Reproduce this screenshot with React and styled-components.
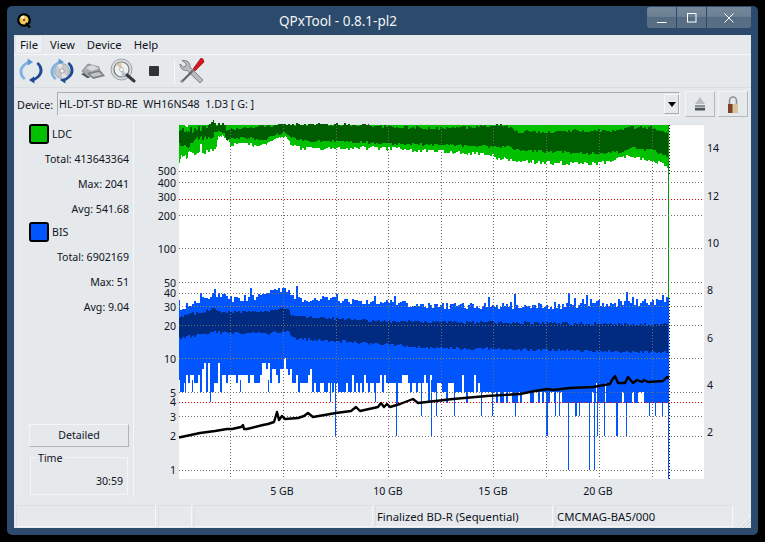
import React, { useMemo } from "react";
import styled, { createGlobalStyle } from "styled-components";

const GlobalStyle = createGlobalStyle`
  html, body {
    margin: 0;
    padding: 0;
    background: #000;
  }
  body {
    font-family: "Noto Sans", "Open Sans", sans-serif;
    font-size: 12px;
    color: #10131c;
  }
`;

const Window = styled.div`
  box-sizing: border-box;
  width: 751px;
  height: 529px;
  margin: 6px 0 0 7px;
  padding: 0 7px 7px;
  display: flex;
  flex-direction: column;
  background: #2c4a6b;
  border-radius: 5px;
`;

const TitleBar = styled.div`
  height: 29px;
  flex: none;
  position: relative;
  display: flex;
  align-items: center;
`;

const Title = styled.div`
  position: absolute;
  left: 0;
  width: 648px;
  top: 6px;
  text-align: center;
  font-size: 13.5px;
  line-height: 18px;
  color: #f2f4f6;
`;

const AppLogo = styled.svg`
  width: 15px;
  height: 15px;
  margin: 0 0 0 3px;
`;

const WinControls = styled.div`
  position: absolute;
  top: 1px;
  right: 0;
  display: flex;
  gap: 1px;
`;

const WinButton = styled.div`
  width: ${(p) => p.$w}px;
  height: 21px;
  display: flex;
  align-items: center;
  justify-content: center;
  background: linear-gradient(#75889a 0%, #6c8093 45%, #566c82 50%, #5a7086 100%);
  border-radius: ${(p) => p.$radius || "0"};
`;

const Content = styled.div`
  flex: 1;
  display: flex;
  flex-direction: column;
  background: #e6e9ec;
  min-height: 0;
`;

const MenuBar = styled.div`
  box-sizing: border-box;
  height: 20px;
  flex: none;
  display: flex;
  align-items: stretch;
  padding-left: 1px;
  border-bottom: 1px solid #f6f7f8;
`;

const MenuItem = styled.div`
  padding: 0 5px;
  margin-right: 2px;
  line-height: 19px;
  font-size: 11.3px;
  ${(p) => p.$active && "background: #eceff1; box-shadow: inset 0 0 0 1px #dfe2e5;"}
`;

const ToolBar = styled.div`
  box-sizing: border-box;
  height: 33px;
  flex: none;
  display: flex;
  align-items: center;
  padding-left: 4px;
  border-bottom: 1px solid #dadde0;
`;

const ToolIcon = styled.svg`
  width: 26px;
  height: 26px;
  margin-right: ${(p) => p.$gap ?? 5}px;
  flex: none;
`;

const StopIcon = styled.div`
  width: 10px;
  height: 10px;
  margin: 0 15px 0 13px;
  background: #333;
  border-radius: 1px;
  flex: none;
`;

const ToolSep = styled.div`
  width: 1px;
  height: 25px;
  background: #f6f7f8;
  margin-right: 4px;
  flex: none;
`;

const DeviceRow = styled.div`
  box-sizing: border-box;
  height: 32px;
  flex: none;
  display: flex;
  align-items: center;
  padding: 0 4px 0 3px;
`;

const DeviceLabel = styled.div`
  width: 40px;
  font-size: 10.8px;
  flex: none;
`;

const Combo = styled.div`
  box-sizing: border-box;
  width: 623px;
  height: 24px;
  flex: none;
  display: flex;
  align-items: center;
  justify-content: space-between;
  padding: 0 0 0 1px;
  border: 1px solid;
  border-color: #a9aeb3 #f6f7f8 #f6f7f8 #a9aeb3;
`;

const ComboText = styled.div`
  font-size: 10.7px;
  white-space: pre;
`;

const ComboArrow = styled.div`
  box-sizing: border-box;
  width: 15px;
  height: 20px;
  display: flex;
  align-items: center;
  justify-content: center;
  border: 1px solid;
  border-color: #f6f7f8 #a9aeb3 #a9aeb3 #f6f7f8;
  &::after {
    content: "";
    border-left: 4px solid transparent;
    border-right: 4px solid transparent;
    border-top: 5px solid #000;
  }
`;

const SquareButton = styled.div`
  box-sizing: border-box;
  width: 30px;
  height: 26px;
  margin-left: ${(p) => p.$left}px;
  flex: none;
  display: flex;
  align-items: center;
  justify-content: center;
  border: 1px solid;
  border-color: #f4f5f6 #b3b8bd #b3b8bd #f4f5f6;
`;

const Main = styled.div`
  flex: 1;
  display: flex;
  min-height: 0;
`;

const Sidebar = styled.div`
  box-sizing: border-box;
  width: 114px;
  flex: none;
  display: flex;
  flex-direction: column;
  padding: 4px 4px 3px 8px;
  margin: 0 0 6px 6px;
  border-left: 1px solid #eceef0;
  border-right: 1px solid #f4f5f6;
`;

const LegendRow = styled.div`
  display: flex;
  align-items: center;
  gap: 3px;
  height: 20px;
  font-size: 10.6px;
`;

const Swatch = styled.div`
  box-sizing: border-box;
  width: 20px;
  height: 20px;
  background: ${(p) => p.$color};
  border: 2px solid #000;
  border-radius: 3px;
`;

const StatRow = styled.div`
  height: 25px;
  line-height: 25px;
  text-align: right;
  font-size: 10.6px;
  margin-top: ${(p) => (p.$first ? 3 : 0)}px;
`;

const Spacer = styled.div`
  flex: 1;
`;

const DetailedButton = styled.div`
  box-sizing: border-box;
  height: 23px;
  line-height: 21px;
  text-align: center;
  font-size: 10.6px;
  border: 1px solid;
  border-color: #f4f5f6 #afb4b9 #afb4b9 #f4f5f6;
`;

const TimeGroup = styled.div`
  box-sizing: border-box;
  position: relative;
  height: 38px;
  margin: 10px 1px 0 1px;
  border: 1px solid #f4f5f6;
  text-align: right;
  padding: 15px 4px 0 0;
  line-height: 16px;
  font-size: 10.6px;
`;

const TimeLegend = styled.div`
  position: absolute;
  top: -6px;
  left: 5px;
  padding: 0 2px;
  line-height: 13px;
  font-size: 10.6px;
  background: #e6e9ec;
`;

const ChartSvg = styled.svg`
  display: block;
  width: 617px;
  height: 380px;
  flex: none;
  font-family: "Noto Sans", "Open Sans", sans-serif;
  font-size: 10.6px;
  fill: #10131c;
`;

const StatusBar = styled.div`
  height: 23px;
  flex: none;
  display: flex;
  padding: 1px 0 0 2px;
  gap: 2px;
  position: relative;
`;

const StatusCell = styled.div`
  box-sizing: border-box;
  width: ${(p) => p.$w}px;
  height: 22px;
  padding-left: 1px;
  line-height: 21px;
  font-size: 11.3px;
  white-space: nowrap;
  border: 1px solid;
  border-color: #dcdfe2 #f6f7f8 #f6f7f8 #dcdfe2;
`;

const Grip = styled.svg`
  position: absolute;
  right: 0;
  bottom: 0;
  width: 13px;
  height: 13px;
`;

// small seeded generator so the trace looks the same on each load
const makeRandom = (seed) => {
  let s = seed;
  return () => {
    s = (s * 1664525 + 1013904223) % 4294967296;
    return s / 4294967296;
  };
};

const curve = (pts) => (x) => {
  if (x <= pts[0][0]) return pts[0][1];
  for (let i = 1; i < pts.length; i++) {
    if (x <= pts[i][0]) {
      const [x0, y0] = pts[i - 1];
      const [x1, y1] = pts[i];
      return y0 + ((y1 - y0) * (x - x0)) / (x1 - x0);
    }
  }
  return pts[pts.length - 1][1];
};

const logY = (v) => 470 - 112 * Math.log10(v);
const snapLevels = [4, 5, 6, 7, 8, 9, 10, 11, 12, 13, 14].map(logY);
const snap = (y) =>
  snapLevels.reduce((a, b) => (Math.abs(b - y) < Math.abs(a - y) ? b : a));

const ldcLight = curve([
  [179, 163], [181, 156], [183, 153], [190, 149], [200, 146], [212, 147], [216, 149], [218, 135],
  [224, 137], [226, 137], [230, 144], [265, 145], [268, 141], [281, 137], [285, 136], [290, 145],
  [298, 148], [335, 149], [375, 148], [435, 151], [487, 154], [500, 159], [547, 163], [600, 163],
  [627, 157], [653, 160], [665, 165], [668, 171],
]);
const ldcDarkTop = curve([
  [179, 130], [190, 133], [200, 131], [210, 130], [213, 125], [225, 125], [226, 130], [240, 129],
  [260, 127], [285, 125], [335, 125], [388, 127], [435, 129], [483, 127], [500, 125], [510, 128],
  [517, 132], [547, 133], [570, 131], [620, 131], [627, 128], [653, 128], [668, 135],
]);
const ldcDarkBottom = curve([
  [179, 144], [190, 141], [200, 137], [210, 135], [214, 131], [224, 132], [226, 140], [240, 137],
  [265, 139], [275, 135], [283, 132], [290, 137], [300, 140], [335, 141], [388, 143], [435, 144],
  [487, 146], [508, 146], [517, 149], [547, 151], [587, 153], [620, 152], [633, 148], [653, 150],
  [668, 156],
]);
const bisTop = curve([
  [179, 305], [203, 295], [213, 293], [225, 292], [230, 297], [253, 293], [270, 288], [288, 287],
  [292, 295], [337, 297], [390, 298], [420, 302], [520, 303], [620, 300], [668, 298],
]);
const bisDarkTop = curve([
  [179, 317], [213, 310], [225, 313], [267, 312], [287, 308], [292, 317], [337, 319], [390, 322],
  [500, 323], [668, 325],
]);
const bisDarkBottom = curve([
  [179, 338], [213, 332], [267, 333], [287, 330], [292, 338], [390, 344], [420, 347], [668, 352],
]);
const bisBottom = curve([
  [179, 378], [213, 376], [225, 373], [270, 372], [285, 368], [292, 379], [335, 383], [420, 385],
  [520, 392], [620, 402], [668, 402],
]);

const bisSpikes = [
  [185, 392], [192, 392], [210, 402], [240, 392], [268, 392], [330, 402], [335, 436], [375, 402],
  [396, 436], [421, 416], [431, 436], [436, 416], [454, 416], [481, 416], [492, 416], [515, 416],
  [546, 436], [547, 436], [555, 416], [559, 416], [568, 470], [575, 416], [576, 416], [579, 416],
  [589, 470], [594, 470], [597, 436], [604, 436], [616, 436], [617, 436], [626, 436], [649, 416],
  [655, 416], [662, 416],
];

const piLine = [
  [179, 437.5], [200, 433], [215, 431], [221, 430], [227, 429], [232, 429], [241, 427], [243, 425],
  [244, 429], [247, 429], [263, 425], [268, 424], [274, 422], [277, 412],
  [279, 420], [282, 416], [285, 419], [298, 418], [304, 416], [308, 413], [313, 417], [336, 413],
  [351, 411], [356, 407], [360, 411], [378, 407], [381, 403], [384, 407], [387, 404], [390, 407],
  [400, 404], [413, 399], [418, 403], [453, 399], [487, 396], [520, 394], [535, 391], [548, 389],
  [553, 390], [570, 388], [593, 387], [610, 384], [612, 380], [615, 376], [618, 383], [625, 383],
  [628, 377], [633, 383], [637, 380], [642, 382], [644, 380], [648, 382], [663, 381], [667, 377],
  [669, 378],
];

const gridRows = [
  { y: 171 }, { y: 182 }, { y: 199, red: true }, { y: 215 }, { y: 248 }, { y: 282 }, { y: 293 },
  { y: 306 }, { y: 325 }, { y: 358 }, { y: 392 }, { y: 402, red: true }, { y: 416 }, { y: 436 },
  { y: 470 },
];
const gridCols = [230, 283, 336, 388, 441, 493, 546, 599, 652];

const leftLabels = [
  [500, 171], [400, 183], [300, 197], [200, 216], [100, 249], [50, 283], [40, 293], [30, 307],
  [20, 326], [10, 359], [5, 393], [4, 402], [3, 417], [2, 436], [1, 470],
];
const rightLabels = [
  [14, 148], [12, 196], [10, 243], [8, 290], [6, 338], [4, 385], [2, 432],
];
const bottomLabels = [
  ["5 GB", 282], ["10 GB", 388], ["15 GB", 493], ["20 GB", 598],
];

function buildTraces() {
  const rnd = makeRandom(20417);
  let lightGreen = "";
  let darkGreen = "";
  let blue = "";
  let darkBlue = "";
  let spikes = "";
  let noiseA = 0;
  let noiseB = 0;
  let noiseC = 0;
  let noiseD = 0;
  let noiseE = 0;
  let blueTop = 300;
  let blueEnd = 380;
  for (let x = 179; x <= 668; x++) {
    const col = x + 0.5;
    if (x % 2 === 0) {
      // the start of the disc is noisier than the rest
      const amp = x < 216 ? 2.4 : 1;
      noiseA = rnd() * 4 * amp;
      noiseB = rnd() * 3 * amp;
      noiseC = rnd() * 3 * amp;
      noiseD = rnd() * 3;
      noiseE = rnd() * 3;
      const r = rnd();
      blueTop = bisTop(x) + rnd() * 7 - (r < 0.2 ? rnd() * 12 : 0);
      const n = rnd();
      const base = bisBottom(x);
      if (n < 0.14) blueEnd = snap(base - 5 - rnd() * 9);
      else if (n < 0.62) blueEnd = snap(base);
      else blueEnd = snap(base + 5 + rnd() * 9);
    }
    const lb = x === 179 ? 163 : ldcLight(x) + noiseA - 2;
    lightGreen += `M${col} 125V${lb.toFixed(0)}`;
    darkGreen += `M${col} ${(ldcDarkTop(x) - noiseB + 1).toFixed(0)}V${(ldcDarkBottom(x) + noiseC - 1).toFixed(0)}`;
    blue += `M${col} ${blueTop.toFixed(0)}V${Math.min(blueEnd, 403).toFixed(0)}`;
    darkBlue += `M${col} ${(bisDarkTop(x) - noiseD + 1).toFixed(0)}V${(bisDarkBottom(x) + noiseE - 1).toFixed(0)}`;
  }
  bisSpikes.forEach(([x, y]) => {
    spikes += `M${x + 0.5} 380V${y}`;
  });
  return { lightGreen, darkGreen, blue, darkBlue, spikes };
}

function Chart() {
  const t = useMemo(buildTraces, []);
  const line = piLine.map(([x, y]) => `${x},${y}`).join(" ");
  return (
    <ChartSvg viewBox="134 120 617 380">
      <rect x="179" y="124" width="525" height="1" fill="#dfe2e5" />
      <rect x="179" y="125" width="525" height="354" fill="#fff" />
      <g fill="none" shapeRendering="crispEdges" strokeWidth="1">
        <path d={t.lightGreen} stroke="#00c000" />
        <path d={t.darkGreen} stroke="#005c00" />
        <path d="M185 125.500h3M186 126.500h2" stroke="#fff" />
        <path d={t.blue} stroke="#0055ff" />
        <path d={t.darkBlue} stroke="#002b80" />
        <path d={t.spikes} stroke="#0055ff" />
        <path d="M668.5 125V298" stroke="#00a000" />
        <path d="M668.5 298V479" stroke="#0055ff" />
        {gridCols.map((x) => (
          <path key={x} d={`M${x + 0.5} 125V479`} stroke="#6e6e6e" strokeDasharray="1 2" />
        ))}
        {gridRows.map((r) => (
          <path
            key={r.y}
            d={`M179 ${r.y + 0.5}H703`}
            stroke={r.red ? "#f00000" : "#6e6e6e"}
            strokeDasharray="1 2"
          />
        ))}
        <path d="M179 306.5H668M179 358.5H668" stroke="#a08a58" strokeDasharray="1 2" />
        <path d="M669.5 125V175M669.5 298V479" stroke="#000" strokeDasharray="1 2" />
      </g>
      <polyline points={line} fill="none" stroke="#000" strokeWidth="2.4" strokeLinejoin="round" />
      {leftLabels.map(([v, y]) => (
        <text key={v} x="176" y={y + 4} textAnchor="end">{v}</text>
      ))}
      {rightLabels.map(([v, y]) => (
        <text key={v} x="707" y={y + 4}>{v}</text>
      ))}
      {bottomLabels.map(([v, x]) => (
        <text key={v} x={x} y="495" textAnchor="middle">{v}</text>
      ))}
    </ChartSvg>
  );
}

const ArrowArcs = () => (
  <>
    <path d="M11 2.500C5 5 1.500 9 1.500 13.500c0 3.500 1.500 6.500 4.500 8.500l1.500-2c-2-1.500-3-4-3-6.500 0-3 2-6 5.500-7.500z" fill="#7fb2e6" />
    <path d="M9.500 .500L15 4l-5 3.500z" fill="#5f97d4" />
    <path d="M15 23.500c6-2.500 9.500-6.500 9.500-11 0-3.500-1.500-6.500-4.500-8.500l-1.500 2c2 1.500 3 4 3 6.500 0 3-2 6-5.500 7.500z" fill="#1d4a94" />
    <path d="M16.500 25.500L11 22l5-3.500z" fill="#1d4a94" />
  </>
);

const RefreshIcon = () => (
  <ToolIcon viewBox="0 0 26 26"><ArrowArcs /></ToolIcon>
);

const DiscRefreshIcon = () => (
  <ToolIcon viewBox="0 0 26 26">
    <ArrowArcs />
    <circle cx="13" cy="13" r="7.500" fill="#c4c8cc" stroke="#8e9499" strokeWidth=".7" />
    <path d="M13 13L7.700 7.700A7.500 7.500 0 0 1 13 5.500zM13 13l5.300 5.300A7.500 7.500 0 0 1 13 20.500z" fill="#e6dfe6" />
    <circle cx="13" cy="13" r="2.200" fill="#f1f2f3" stroke="#888d92" strokeWidth=".7" />
  </ToolIcon>
);

const DriveIcon = () => (
  <ToolIcon viewBox="0 0 26 26" $gap={4}>
    <path d="M2 13l6-7 11 3 1 7-13 3z" fill="#a9adb1" stroke="#6e7377" strokeWidth=".7" />
    <path d="M6 10l6-3 7 3-7 3z" fill="#d7dadd" />
    <path d="M7 15l13-3 5 6-12 3z" fill="#7b8085" />
    <path d="M10 16l9-2 3 3-9 2z" fill="#c3c7ca" />
    <path d="M1 16l6 4 3 0-6-5z" fill="#565b60" />
  </ToolIcon>
);

const ScanIcon = () => (
  <ToolIcon viewBox="0 0 26 26" $gap={0}>
    <circle cx="11.500" cy="11.500" r="10.500" fill="#d9dbdd" stroke="#9ea2a6" strokeWidth="1" />
    <circle cx="11.500" cy="11.500" r="7.500" fill="#eef0f1" stroke="#74787c" strokeWidth="1.200" />
    <path d="M11.500 11.500L6 6.500A7.500 7.500 0 0 1 11.500 4z" fill="#d6c7a8" />
    <path d="M11.500 11.500L17 16.500A7.500 7.500 0 0 1 11.500 19z" fill="#b9c6d8" />
    <circle cx="11.500" cy="11.500" r="2" fill="#fff" stroke="#8c9094" strokeWidth=".6" />
    <path d="M17 17l7 6" stroke="#34383c" strokeWidth="3" strokeLinecap="round" />
  </ToolIcon>
);

const ToolsIcon = () => (
  <ToolIcon viewBox="0 0 26 26" $gap={0}>
    <path d="M3 2.500l4 3v2.500l-2.500 1-3.500-3c0 4 3 7 7 6.500l13 12.500 3-3L11 9C11.500 5 8 1.500 3 2.500z" fill="#b8bcc0" stroke="#6c7074" strokeWidth=".8" />
    <path d="M2 23l1.500 1.500 11-11-1.500-1.500z" fill="#5e6266" />
    <path d="M3 25l-2-1.500 1.500-2 2 1.500z" fill="#8b8f93" />
    <path d="M14 11l2 2 9-9-1-3-2-1z" fill="#d8141c" stroke="#8c0c12" strokeWidth=".6" />
  </ToolIcon>
);

function App() {
  return (
    <>
      <GlobalStyle />
      <Window>
        <TitleBar>
          <AppLogo viewBox="0 0 15 15">
            <circle cx="7" cy="7" r="6.800" fill="#000" />
            <circle cx="7" cy="7" r="4.600" fill="#f4c95a" />
            <path d="M7 7L3.500 4A4.600 4.600 0 0 1 7 2.400z" fill="#fff6d8" />
            <circle cx="7" cy="7" r="1.200" fill="#8a5a20" />
            <path d="M9 10l4 4.500" stroke="#000" strokeWidth="2.400" />
          </AppLogo>
          <Title>QPxTool - 0.8.1-pl2</Title>
          <WinControls>
            <WinButton $w={29} $radius="3px 0 0 3px">
              <svg width="10" height="10" viewBox="0 0 10 10">
                <path d="M0 9.500H9.500" stroke="#fff" strokeWidth="1" />
              </svg>
            </WinButton>
            <WinButton $w={29}>
              <svg width="10" height="10" viewBox="0 0 10 10">
                <rect x=".5" y=".5" width="8.500" height="8.500" fill="none" stroke="#fff" />
              </svg>
            </WinButton>
            <WinButton $w={44} $radius="0 0 3px 0">
              <svg width="10" height="10" viewBox="0 0 10 10">
                <path d="M.5.500L9.500 9.500M9.500.500L.5 9.500" stroke="#fff" strokeWidth="1" />
              </svg>
            </WinButton>
          </WinControls>
        </TitleBar>
        <Content>
          <MenuBar>
            <MenuItem $active>File</MenuItem>
            <MenuItem>View</MenuItem>
            <MenuItem>Device</MenuItem>
            <MenuItem>Help</MenuItem>
          </MenuBar>
          <ToolBar>
            <RefreshIcon />
            <DiscRefreshIcon />
            <DriveIcon />
            <ScanIcon />
            <StopIcon />
            <ToolSep />
            <ToolsIcon />
          </ToolBar>
          <DeviceRow>
            <DeviceLabel>Device:</DeviceLabel>
            <Combo>
              <ComboText>HL-DT-ST BD-RE  WH16NS48  1.D3 [ G: ]</ComboText>
              <ComboArrow />
            </Combo>
            <SquareButton $left={5}>
              <svg width="12" height="14" viewBox="0 0 12 14">
                <path d="M6 0l5 7H1z" fill="#b9bdc1" />
                <rect x="1" y="8" width="10" height="2.500" fill="#8b9094" />
                <rect x="1" y="11" width="10" height="2.500" fill="#4f5458" />
              </svg>
            </SquareButton>
            <SquareButton $left={3}>
              <svg width="14" height="17" viewBox="0 0 14 17">
                <path d="M3.500 8V4.500a3.500 3.500 0 0 1 7 0V8" fill="none" stroke="#8e8f90" strokeWidth="1.600" />
                <rect x="2" y="8" width="10" height="9" fill="#d8c4a0" />
                <rect x="2" y="8" width="4.500" height="9" fill="#7f3f28" />
              </svg>
            </SquareButton>
          </DeviceRow>
          <Main>
            <Sidebar>
              <LegendRow><Swatch $color="#00c000" />LDC</LegendRow>
              <StatRow $first>Total: 413643364</StatRow>
              <StatRow>Max: 2041</StatRow>
              <StatRow>Avg: 541.68</StatRow>
              <LegendRow><Swatch $color="#0055ff" />BIS</LegendRow>
              <StatRow $first>Total: 6902169</StatRow>
              <StatRow>Max: 51</StatRow>
              <StatRow>Avg: 9.04</StatRow>
              <Spacer />
              <DetailedButton>Detailed</DetailedButton>
              <TimeGroup>
                <TimeLegend>Time</TimeLegend>
                30:59
              </TimeGroup>
            </Sidebar>
            <Chart />
          </Main>
          <StatusBar>
            <StatusCell $w={140} />
            <StatusCell $w={34} />
            <StatusCell $w={179} />
            <StatusCell $w={178}>Finalized BD-R (Sequential)</StatusCell>
            <StatusCell $w={178}>CMCMAG-BA5/000</StatusCell>
            <Grip viewBox="0 0 13 13">
              <path d="M13 1L1 13M13 4.500L4.500 13M13 8L8 13" stroke="#f6f7f8" strokeWidth="1" />
              <path d="M13 2.500L2.500 13M13 6L6 13M13 9.500L9.500 13" stroke="#c9cdd1" strokeWidth="1" />
            </Grip>
          </StatusBar>
        </Content>
      </Window>
    </>
  );
}

export default App;
